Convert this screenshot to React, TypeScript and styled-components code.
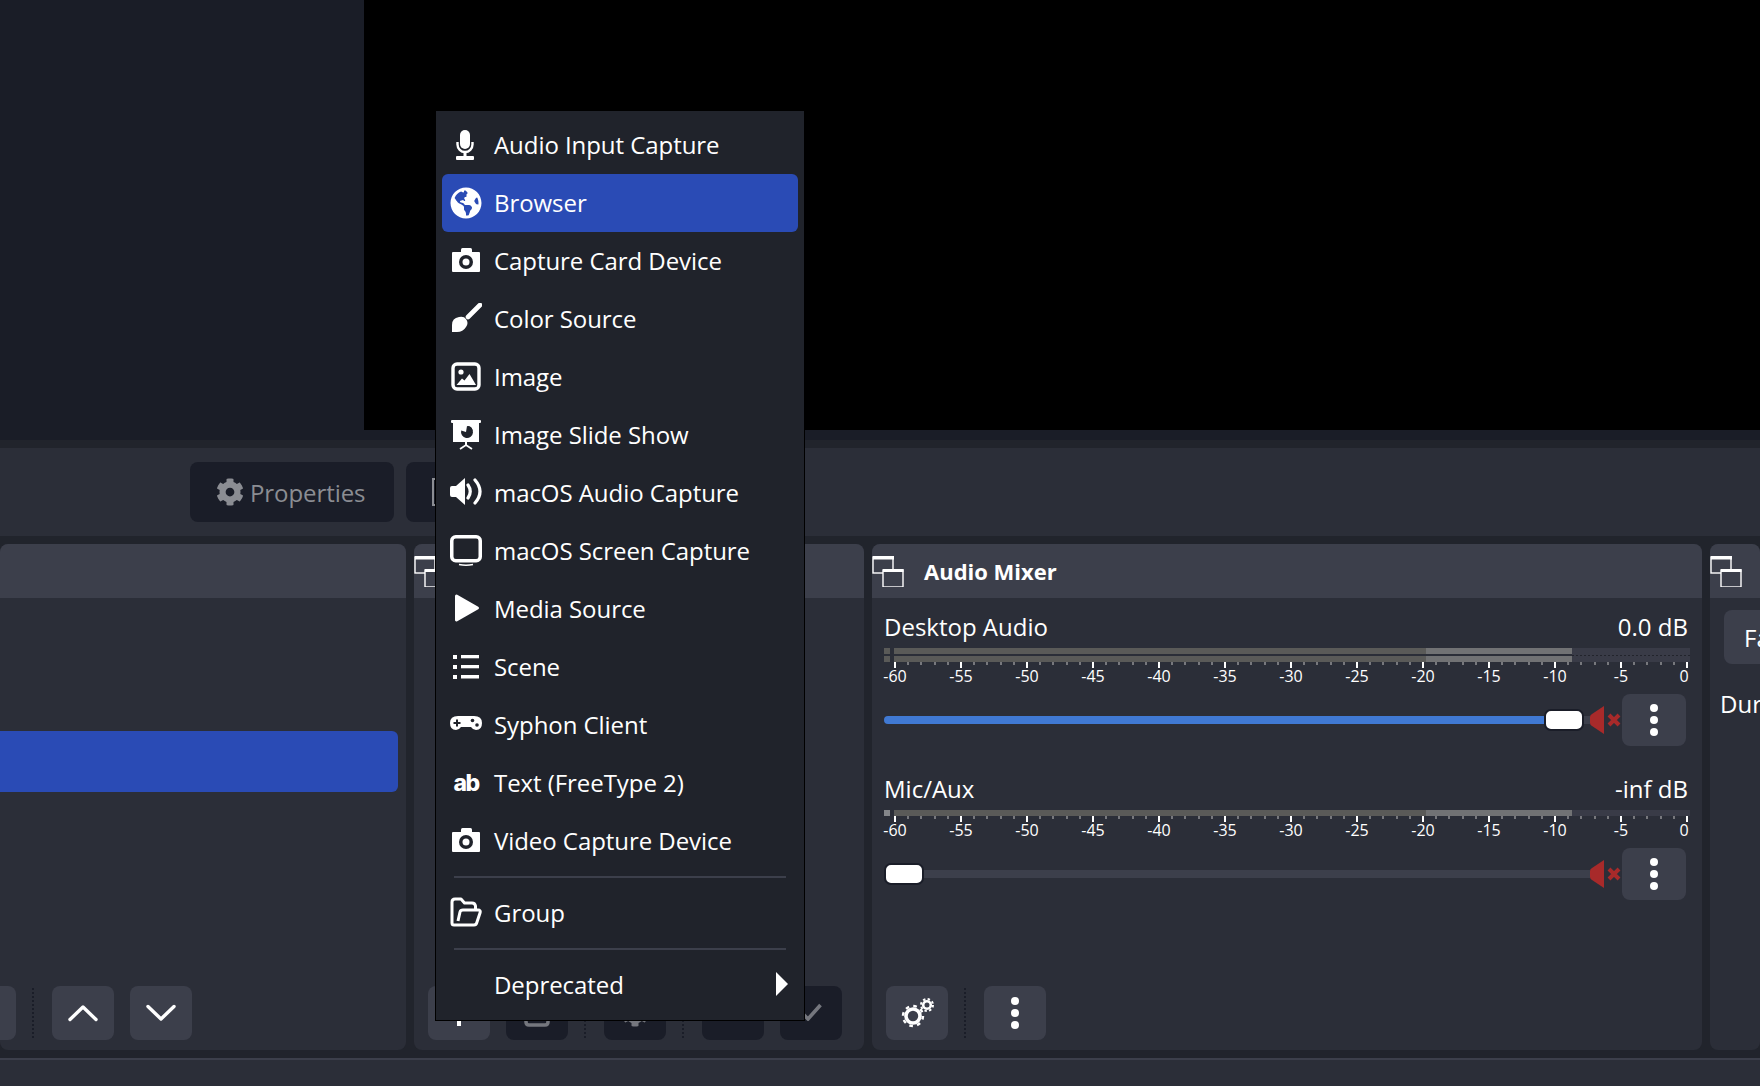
import styled, { createGlobalStyle } from 'styled-components'
import { FaCog, FaGlobeAmericas } from 'react-icons/fa'
import type { ReactNode } from 'react'

const GlobalStyle = createGlobalStyle`
  html, body {
    margin: 0;
    padding: 0;
    background: #21242c;
  }
  * {
    box-sizing: border-box;
  }
`

const Page = styled.div`
  position: relative;
  width: 1760px;
  height: 1086px;
  overflow: hidden;
  display: flex;
  flex-direction: column;
  background: #21242c;
  color: #fff;
  font-family: 'Open Sans', 'Noto Sans', sans-serif;
  font-size: 24px;
`

const Preview = styled.div`
  height: 448px;
  flex: none;
  display: flex;
  align-items: flex-start;
  background: linear-gradient(to bottom, #1a1d27 0 440px, #21242c 440px);
`

const PreviewCanvas = styled.div`
  width: 1396px;
  height: 430px;
  margin-left: 364px;
  background: #000;
`

const Toolbar = styled.div`
  height: 88px;
  flex: none;
  display: flex;
  align-items: center;
  gap: 12px;
  padding-left: 190px;
  background: #2b2e38;
`

const ToolbarButton = styled.div`
  width: 204px;
  height: 60px;
  display: flex;
  align-items: center;
  gap: 6px;
  padding-left: 26px;
  border-radius: 8px;
  background: #1a1d28;
  color: #8b8d93;
  letter-spacing: -0.08px;
`

const Docks = styled.div`
  height: 506px;
  flex: none;
  margin-top: 8px;
  display: flex;
  gap: 8px;
`

const Dock = styled.section<{ $width: number }>`
  width: ${(p) => p.$width}px;
  flex: none;
  display: flex;
  flex-direction: column;
  border-radius: 8px;
  overflow: hidden;
  background: #2b2e38;
`

const DockHeader = styled.header`
  height: 54px;
  flex: none;
  display: flex;
  align-items: center;
  background: #3c3f4b;
`

const DockTitle = styled.h2`
  margin: 0 0 0 20px;
  font-size: 22px;
  font-weight: 700;
  line-height: 30px;
`

const DockBody = styled.div`
  flex: 1;
  min-height: 0;
`

const SelectedRow = styled.div`
  height: 61px;
  margin: 133px 8px 0 0;
  border-radius: 0 6px 6px 0;
  background: #2a4bb5;
`

const DockFooter = styled.footer<{ $offset: number }>`
  height: 64px;
  flex: none;
  display: flex;
  gap: 16px;
  margin-left: ${(p) => p.$offset}px;
`

const FooterButton = styled.div<{ $disabled?: boolean }>`
  width: 62px;
  height: 54px;
  flex: none;
  display: flex;
  align-items: center;
  justify-content: center;
  border-radius: 8px;
  background: ${(p) => (p.$disabled ? '#1a1d28' : '#3c3f4b')};
  color: ${(p) => (p.$disabled ? '#75777e' : '#fff')};
`

const DotSeparator = styled.div`
  width: 2px;
  height: 50px;
  margin: 2px 2px 0 0;
  border-left: 2px dotted #1a1d28;
`

const Strip = styled.div`
  width: 806px;
  margin-left: 12px;
`

const StripHead = styled.div<{ $top: number }>`
  height: 32px;
  margin: ${(p) => p.$top}px 0 5px;
  display: flex;
  justify-content: space-between;
  padding-right: 2px;
  line-height: 32px;
`

const Meter = styled.div`
  display: flex;
  flex-direction: column;
  gap: 2px;
  background:
    repeating-linear-gradient(to right, #22242c 0 2px, transparent 2px 4px) right center / 118px 1px no-repeat,
    linear-gradient(#393b47, #393b47) right top / 118px 100% no-repeat;
`

const Channel = styled.div`
  height: 6px;
  display: flex;
  gap: 4px;
`

const ClipLight = styled.div<{ $lit?: boolean }>`
  width: 6px;
  flex: none;
  background: ${(p) => (p.$lit ? '#84868a' : '#5a5a58')};
`

const ChannelBar = styled.div`
  width: 796px;
  background: linear-gradient(
    to right,
    #5a5a58 0 532px,
    #717274 532px 678px,
    #393b47 678px
  );
`

const Scale = styled.div`
  height: 6px;
  margin-left: 10px;
  width: 796px;
  background:
    repeating-linear-gradient(to right, #fff 0 2px, transparent 2px 66px) 0 0 / 100% 6px no-repeat,
    repeating-linear-gradient(to right, #77787d 0 2px, transparent 2px 13.2px) 0 0 / 100% 3px no-repeat;
`

const ScaleLabels = styled.div`
  display: grid;
  grid-template-columns: repeat(13, 66px);
  margin-left: -22px;
  font-size: 16px;
  line-height: 16px;
  text-align: center;

  span:last-child {
    transform: translateX(-3px);
  }
`

const StripControls = styled.div`
  height: 52px;
  margin-top: 10px;
  display: flex;
  align-items: center;
`

const Slider = styled.div`
  width: 706px;
  flex: none;
  display: flex;
  align-items: center;
`

const SliderFill = styled.div`
  height: 8px;
  flex: none;
  border-radius: 4px 0 0 4px;
  background: #4079d3;
`

const SliderRest = styled.div`
  height: 8px;
  flex: 1;
  background: #3c3f4b;
`

const SliderHandle = styled.div`
  width: 40px;
  height: 22px;
  flex: none;
  border: 2px solid #1a1d28;
  border-radius: 7px;
  background: #fff;
`

const MuteIcon = styled.svg`
  width: 32px;
  height: 30px;
  flex: none;
`

const StripMenu = styled(FooterButton)`
  width: 64px;
  height: 52px;
`

const FadeButton = styled.div`
  width: 80px;
  height: 54px;
  margin: 12px 0 0 14px;
  display: flex;
  align-items: center;
  padding-left: 20px;
  border-radius: 8px;
  background: #3c3f4b;
`

const ClippedLabel = styled.div`
  margin: 24px 0 0 10px;
  white-space: nowrap;
  line-height: 32px;
`

const StatusBar = styled.div`
  height: 28px;
  flex: none;
  margin-top: 8px;
  border-top: 2px solid #3c3f4b;
  background: #2b2e38;
`

const Menu = styled.nav`
  position: absolute;
  left: 435px;
  top: 110px;
  width: 370px;
  height: 911px;
  padding: 5px 6px;
  border: 1px solid #000;
  background: #20232b;
`

const MenuItem = styled.div<{ $active?: boolean }>`
  height: 58px;
  display: flex;
  align-items: center;
  padding-left: 52px;
  position: relative;
  border-radius: 6px;
  background: ${(p) => (p.$active ? '#2a4bb5' : 'transparent')};
  line-height: 32px;
  letter-spacing: -0.06px;
`

const MenuIconSlot = styled.span`
  position: absolute;
  left: 8px;
  top: 13px;
  width: 32px;
  height: 32px;
  display: flex;
  align-items: center;
  justify-content: center;
`

const AbIcon = styled.span`
  font-family: 'Inter', 'Liberation Sans', sans-serif;
  font-size: 23px;
  font-weight: 800;
  letter-spacing: -1.5px;
`

const MenuDivider = styled.div`
  height: 2px;
  margin: 6px 12px;
  background: #3c3f4b;
`

const SubmenuArrow = styled.span`
  position: absolute;
  right: 10px;
  top: 16px;
  width: 0;
  height: 0;
  border-left: 12px solid #fff;
  border-top: 12px solid transparent;
  border-bottom: 12px solid transparent;
`

const CheckHolder = styled.span`
  display: flex;
  margin-bottom: 3px;
`

const menuBg = '#20232b'
const scaleValues = [-60, -55, -50, -45, -40, -35, -30, -25, -20, -15, -10, -5, 0]

// OBS float button, two overlapping windows
const FloatIcon = () => (
  <svg width="32" height="32" viewBox="0 0 32 32" style={{ flex: 'none' }} fill="none" stroke="#fff" strokeWidth="1.4">
    <rect x="1" y="2" width="20" height="16" />
    <rect x="1" y="1" width="21" height="3.5" fill="#fff" stroke="none" />
    <rect x="11" y="15" width="20" height="17" fill="#3c3f4b" />
    <rect x="11" y="14" width="20.5" height="3" fill="#fff" stroke="none" />
  </svg>
)

const DotsIcon = () => (
  <svg width="10" height="32" viewBox="0 0 10 32" fill="#fff">
    <circle cx="5" cy="4" r="4" />
    <circle cx="5" cy="16" r="4" />
    <circle cx="5" cy="28" r="4" />
  </svg>
)

const Chevron = ({ up }: { up?: boolean }) => (
  <svg width="30" height="18" viewBox="0 0 30 18" fill="none" stroke="#fff" strokeWidth="3.4" strokeLinecap="round" strokeLinejoin="round">
    <path d={up ? 'M2 15.5 L15 3 L28 15.5' : 'M2 2.5 L15 15 L28 2.5'} />
  </svg>
)

const CheckIcon = () => (
  <svg width="22" height="18" viewBox="0 0 22 18" fill="none" stroke="#75777e" strokeWidth="3.6">
    <path d="M1.5 9.5 L8 16 L20.5 2" />
  </svg>
)

const PlusIcon = () => (
  <svg width="26" height="26" viewBox="0 0 26 26" fill="#fff">
    <rect x="11" y="0" width="4" height="26" />
    <rect x="0" y="11" width="26" height="4" />
  </svg>
)

const TrashIcon = () => (
  <svg width="26" height="28" viewBox="0 0 26 28" fill="none" stroke="#75777e" strokeWidth="3.5">
    <path d="M0 5 H26 M2 5 V23 Q2 26 5 26 H21 Q24 26 24 23 V5 M9 5 V1.5 H17 V5" />
  </svg>
)

const FilterIcon = () => (
  <svg width="28" height="28" viewBox="0 0 28 28" fill="none" stroke="#8b8d93" strokeWidth="2">
    <rect x="1" y="1" width="26" height="26" />
  </svg>
)

const CogsIcon = () => (
  <svg width="34" height="30" viewBox="0 0 34 30" fill="none" stroke="#fff">
    <circle cx="13" cy="18" r="7" strokeWidth="3.6" />
    <circle cx="13" cy="18" r="10" strokeWidth="2.4" strokeDasharray="3.6 4.25" />
    <circle cx="27" cy="7" r="3.8" strokeWidth="2.6" />
    <circle cx="27" cy="7" r="6" strokeWidth="2" strokeDasharray="2.4 2.3" />
  </svg>
)

const MicIcon = () => (
  <svg width="32" height="32" viewBox="0 0 32 32" fill="#fff">
    <rect x="10" y="1" width="10" height="19" rx="5" />
    <path d="M7.5 13 V15.500 a7.5 7.500 0 0 0 15 0 V13" fill="none" stroke="#fff" strokeWidth="2.400" />
    <rect x="13.500" y="22" width="3" height="6" />
    <rect x="6" y="27" width="18" height="4" rx="1" />
  </svg>
)

const CameraIcon = () => (
  <svg width="32" height="32" viewBox="0 0 32 32" fill="#fff">
    <rect x="11" y="3" width="11" height="6" rx="1.500" />
    <rect x="2" y="7" width="28" height="20" rx="1" />
    <circle cx="16" cy="17" r="7" fill={menuBg} />
    <circle cx="16" cy="17" r="3.500" />
  </svg>
)

const BrushIcon = () => (
  <svg width="32" height="32" viewBox="0 0 32 32" fill="#fff">
    <path d="M30 2 L18 14" stroke="#fff" strokeWidth="4.600" strokeLinecap="round" />
    <path d="M2 29 V22 Q2 15 9 14 Q14 13 16 16 Q19 20 16 24 Q13 29 7 29 Z" />
  </svg>
)

const ImageIcon = () => (
  <svg width="30" height="30" viewBox="0 0 30 30">
    <rect x="2" y="2" width="26" height="25" rx="4" fill="none" stroke="#fff" strokeWidth="3.4" />
    <circle cx="10" cy="10" r="2.6" fill="#fff" />
    <path d="M5.5 23 L11 16.5 L13.5 18.5 L18.5 12 L25 23 Z" fill="#fff" />
  </svg>
)

const SlideShowIcon = () => (
  <svg width="30" height="30" viewBox="0 0 30 30" fill="#fff">
    <rect x="0" y="0" width="30" height="3" rx="1" />
    <path d="M2 3 H28 V22 H2 Z" />
    <path d="M16 6 a6 6 0 1 1 -5.800 4.500 L15 12 Z" fill={menuBg} />
    <path d="M17 6 a5 5 0 0 1 4.500 5 h-4.500 z" fill={menuBg} />
    <rect x="14" y="22" width="2" height="3" />
    <path d="M9 29 L15 25 L21 29" fill="none" stroke="#fff" strokeWidth="1.8" />
  </svg>
)

const SpeakerIcon = () => (
  <svg width="32" height="32" viewBox="0 0 32 32" fill="#fff">
    <path d="M0 11 Q0 9 2 9 H6 L15 1 V28 L6 20 H2 Q0 20 0 18 Z" />
    <path d="M18 8 Q22.500 14.500 18 21 M25 3 Q35 14.500 25 26" fill="none" stroke="#fff" strokeWidth="3.200" strokeLinecap="round" />
  </svg>
)

const ScreenIcon = () => (
  <svg width="32" height="32" viewBox="0 0 32 32" fill="none" stroke="#fff">
    <rect x="1.750" y="1.750" width="28.500" height="24" rx="4" strokeWidth="3.500" />
    <path d="M9 29.500 Q16 31 23 29.500" strokeWidth="1.500" />
  </svg>
)

const PlayIcon = () => (
  <svg width="32" height="32" viewBox="0 0 32 32" fill="#fff" stroke="#fff" strokeWidth="3" strokeLinejoin="round">
    <path d="M6.500 3 L27.500 15 L6.500 27 Z" />
  </svg>
)

const ListIcon = () => (
  <svg width="28" height="26" viewBox="0 0 28 26" fill="#fff">
    <rect x="1" y="1" width="4" height="4" />
    <rect x="1" y="11" width="4" height="4" />
    <rect x="1" y="21" width="4" height="4" />
    <rect x="9" y="1" width="18" height="3.300" />
    <rect x="9" y="11" width="18" height="3.300" />
    <rect x="9" y="21" width="18" height="3.500" />
  </svg>
)

const GamepadIcon = () => (
  <svg width="32" height="32" viewBox="0 0 32 32" fill="#fff">
    <path d="M8 7 H24 Q32 7 32 14 Q32 21 26 21 Q23 21 21 18 H11 Q9 21 6 21 Q0 21 0 14 Q0 7 8 7 Z" />
    <rect x="6" y="10.500" width="2" height="7" fill={menuBg} />
    <rect x="3.500" y="13" width="7" height="2" fill={menuBg} />
    <circle cx="22.500" cy="11.500" r="1.800" fill={menuBg} />
    <circle cx="27" cy="16" r="1.800" fill={menuBg} />
  </svg>
)

const FolderIcon = () => (
  <svg width="32" height="32" viewBox="0 0 32 32" fill="none" stroke="#fff" strokeWidth="3" strokeLinejoin="round">
    <path d="M4 28 Q2 28 2 26 V5 Q2 2 5 2 H11 L14.500 6 H22 Q25 6 25.500 9 V12" />
    <path d="M8 24 L10 15 Q10.500 13 13 13 H28 Q31 13 30 16 L27 25 Q26.500 28 24 28 H4" />
  </svg>
)

const MutedSpeaker = () => (
  <MuteIcon viewBox="0 0 32 30">
    <path d="M0 12 Q0 10 2 9 L14 1 V29 L2 21 Q0 20 0 18 Z" fill="#a82a2a" />
    <path d="M19 10 L29 20 M29 10 L19 20" stroke="#a82a2a" strokeWidth="4" fill="none" />
  </MuteIcon>
)

interface SourceRow {
  label: string
  icon: ReactNode
  active?: boolean
}

const sourceRows: SourceRow[] = [
  { label: 'Audio Input Capture', icon: <MicIcon /> },
  { label: 'Browser', icon: <FaGlobeAmericas size={32} />, active: true },
  { label: 'Capture Card Device', icon: <CameraIcon /> },
  { label: 'Color Source', icon: <BrushIcon /> },
  { label: 'Image', icon: <ImageIcon /> },
  { label: 'Image Slide Show', icon: <SlideShowIcon /> },
  { label: 'macOS Audio Capture', icon: <SpeakerIcon /> },
  { label: 'macOS Screen Capture', icon: <ScreenIcon /> },
  { label: 'Media Source', icon: <PlayIcon /> },
  { label: 'Scene', icon: <ListIcon /> },
  { label: 'Syphon Client', icon: <GamepadIcon /> },
  { label: 'Text (FreeType 2)', icon: <AbIcon>ab</AbIcon> },
  { label: 'Video Capture Device', icon: <CameraIcon /> },
]

interface MixerStripProps {
  name: string
  value: string
  top: number
  stereo?: boolean
  fill: number
}

const MixerStrip = ({ name, value, top, stereo, fill }: MixerStripProps) => (
  <Strip>
    <StripHead $top={top}>
      <span>{name}</span>
      <span>{value}</span>
    </StripHead>
    <Meter>
      <Channel>
        <ClipLight $lit={!stereo} />
        <ChannelBar />
      </Channel>
      {stereo && (
        <Channel>
          <ClipLight />
          <ChannelBar />
        </Channel>
      )}
    </Meter>
    <Scale />
    <ScaleLabels>
      {scaleValues.map((v) => (
        <span key={v}>{v}</span>
      ))}
    </ScaleLabels>
    <StripControls>
      <Slider>
        {fill > 0 && <SliderFill style={{ width: fill }} />}
        <SliderHandle />
        <SliderRest />
      </Slider>
      <MutedSpeaker />
      <StripMenu>
        <DotsIcon />
      </StripMenu>
    </StripControls>
  </Strip>
)

const App = () => {
  return (
    <Page>
      <GlobalStyle />
      <Preview>
        <PreviewCanvas />
      </Preview>
      <Toolbar>
        <ToolbarButton>
          <FaCog size={28} />
          Properties
        </ToolbarButton>
        <ToolbarButton>
          <FilterIcon />
        </ToolbarButton>
      </Toolbar>
      <Docks>
        <Dock $width={406}>
          <DockHeader />
          <DockBody>
            <SelectedRow />
          </DockBody>
          <DockFooter $offset={-46}>
            <FooterButton />
            <DotSeparator />
            <FooterButton>
              <Chevron up />
            </FooterButton>
            <FooterButton>
              <Chevron />
            </FooterButton>
          </DockFooter>
        </Dock>
        <Dock $width={450}>
          <DockHeader>
            <FloatIcon />
          </DockHeader>
          <DockBody />
          <DockFooter $offset={14}>
            <FooterButton>
              <PlusIcon />
            </FooterButton>
            <FooterButton $disabled>
              <TrashIcon />
            </FooterButton>
            <DotSeparator />
            <FooterButton $disabled>
              <FaCog size={28} />
            </FooterButton>
            <DotSeparator />
            <FooterButton $disabled />
            <FooterButton $disabled>
              <CheckHolder>
                <CheckIcon />
              </CheckHolder>
            </FooterButton>
          </DockFooter>
        </Dock>
        <Dock $width={830}>
          <DockHeader>
            <FloatIcon />
            <DockTitle>Audio Mixer</DockTitle>
          </DockHeader>
          <DockBody>
            <MixerStrip name="Desktop Audio" value="0.0 dB" top={13} stereo fill={660} />
            <MixerStrip name="Mic/Aux" value="-inf dB" top={27} fill={0} />
          </DockBody>
          <DockFooter $offset={14}>
            <FooterButton>
              <CogsIcon />
            </FooterButton>
            <DotSeparator />
            <FooterButton>
              <DotsIcon />
            </FooterButton>
          </DockFooter>
        </Dock>
        <Dock $width={50}>
          <DockHeader>
            <FloatIcon />
          </DockHeader>
          <DockBody>
            <FadeButton>Fade</FadeButton>
            <ClippedLabel>Duration</ClippedLabel>
          </DockBody>
        </Dock>
      </Docks>
      <StatusBar />
      <Menu>
        {sourceRows.map((row) => (
          <MenuItem key={row.label} $active={row.active}>
            <MenuIconSlot>{row.icon}</MenuIconSlot>
            {row.label}
          </MenuItem>
        ))}
        <MenuDivider />
        <MenuItem>
          <MenuIconSlot>
            <FolderIcon />
          </MenuIconSlot>
          Group
        </MenuItem>
        <MenuDivider />
        <MenuItem>
          Deprecated
          <SubmenuArrow />
        </MenuItem>
      </Menu>
    </Page>
  )
}

export default App
